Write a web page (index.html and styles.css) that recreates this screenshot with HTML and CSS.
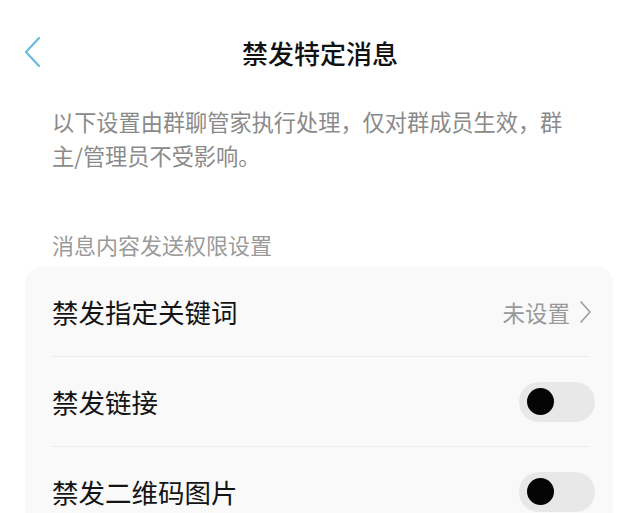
FILE: index.html
```html
<!DOCTYPE html>
<html lang="zh-CN">
<head>
<meta charset="utf-8">
<link rel="stylesheet" href="styles.css">
</head>
<body>
<div class="page">
  <header class="topbar">
    <svg class="back" width="18" height="32" viewBox="0 0 18 32"><path d="M16 2 L3 16 L16 30" fill="none" stroke="#6bbbdd" stroke-width="2.2" stroke-linecap="round" stroke-linejoin="round"/></svg>
    <h1 class="title">禁发特定消息</h1>
  </header>
  <p class="desc">以下设置由群聊管家执行处理，仅对群成员生效，群主/管理员不受影响。</p>
  <div class="section-label">消息内容发送权限设置</div>
  <div class="card">
    <div class="row">
      <span class="row-text">禁发指定关键词</span>
      <span class="row-value">未设置<svg class="arrow" width="13" height="24" viewBox="0 0 13 24"><path d="M2 2 L11 12 L2 22" fill="none" stroke="#9a9a9a" stroke-width="1.5" stroke-linecap="round" stroke-linejoin="round"/></svg></span>
    </div>
    <div class="divider"></div>
    <div class="row">
      <span class="row-text">禁发链接</span>
      <span class="toggle"><span class="knob"></span></span>
    </div>
    <div class="divider"></div>
    <div class="row">
      <span class="row-text">禁发二维码图片</span>
      <span class="toggle"><span class="knob"></span></span>
    </div>
  </div>
</div>
</body>
</html>
```
FILE: styles.css
```css
* { box-sizing: border-box; }
html, body {
  margin: 0;
  padding: 0;
  background: #ffffff;
}
body {
  font-family: "Noto Sans CJK SC", "Noto Sans", sans-serif;
  width: 640px;
  height: 513px;
  overflow: hidden;
}
.page {
  display: flex;
  flex-direction: column;
}
.topbar {
  height: 104px;
  display: flex;
  align-items: center;
  justify-content: center;
  position: relative;
}
.back {
  position: absolute;
  left: 23px;
  top: 36px;
}
.title {
  margin: 0;
  font-size: 26px;
  font-weight: 500;
  color: #111111;
}
.desc {
  margin: 0;
  padding: 0 64px 0 52px;
  font-size: 22.2px;
  line-height: 34px;
  color: #8a8a8a;
}
.section-label {
  margin-top: 57px;
  padding-left: 52px;
  font-size: 22px;
  line-height: 30px;
  color: #9a9a9a;
}
.card {
  margin: 8px 27px 0 25px;
  background: #f9f9f9;
  border-radius: 16px;
  display: flex;
  flex-direction: column;
}
.row {
  height: 89px;
  display: flex;
  align-items: center;
  justify-content: space-between;
  padding: 0 18px 0 27px;
}
.row-text {
  font-size: 26.5px;
  color: #141414;
}
.row-value {
  display: flex;
  align-items: center;
  gap: 9px;
  font-size: 22.5px;
  color: #9a9a9a;
  padding-right: 3px;
}
.arrow { display: block; }
.divider {
  height: 1px;
  margin: 0 23px 0 27px;
  background: #ececec;
}
.toggle {
  width: 76px;
  height: 40px;
  border-radius: 20px;
  background: #e8e8e8;
  display: flex;
  align-items: center;
  padding-left: 8px;
}
.knob {
  width: 27px;
  height: 27px;
  border-radius: 50%;
  background: #050505;
}
```
